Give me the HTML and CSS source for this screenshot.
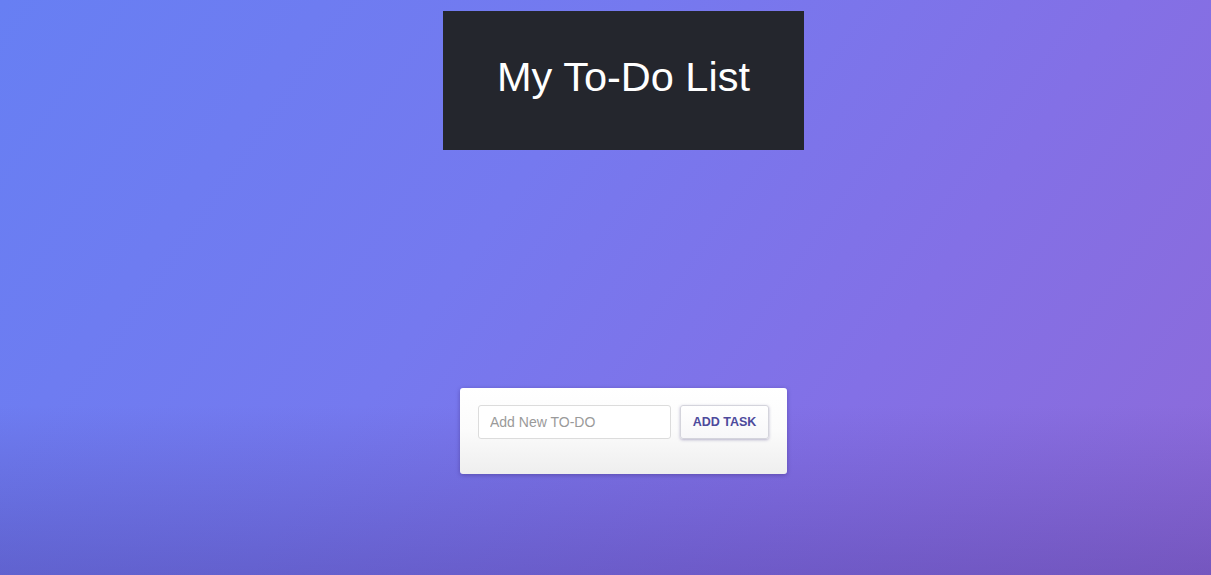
FILE: index.html
```html
<!DOCTYPE html>
<html>
<head>
<meta charset="utf-8">
<link rel="stylesheet" href="styles.css">
</head>
<body>
<div class="page">
  <header class="title-box">
    <h1 class="title">My To-Do List</h1>
  </header>
  <section class="card">
    <form class="add-row">
      <input class="todo-input" type="text" placeholder="Add New TO-DO">
      <button class="add-btn" type="button">ADD TASK</button>
    </form>
    <ul class="todo-list"></ul>
  </section>
</div>
</body>
</html>
```
FILE: styles.css
```css
html, body {
  margin: 0;
  padding: 0;
  height: 100%;
}
body {
  font-family: "Liberation Sans", Arial, sans-serif;
  background: linear-gradient(125deg, #677ff3 0%, #7579ef 40%, #8370e6 70%, #8d6ad9 100%);
  overflow: hidden;
}
.page {
  position: relative;
  min-height: 575px;
  box-sizing: border-box;
  padding-left: 36px;
  display: flex;
  flex-direction: column;
  align-items: center;
}
.page::after {
  content: "";
  position: absolute;
  left: 0;
  right: 0;
  bottom: 0;
  height: 170px;
  background: linear-gradient(to bottom, rgba(60, 40, 130, 0) 0%, rgba(60, 40, 130, 0.3) 100%);
  pointer-events: none;
}
.title-box {
  margin-top: 11px;
  width: 361px;
  height: 139px;
  background: #24262d;
  display: flex;
  align-items: center;
  justify-content: center;
}
.title {
  margin: 0 0 8px 0;
  color: #ffffff;
  font-weight: normal;
  font-size: 41.5px;
  letter-spacing: 0;
}
.card {
  position: relative;
  z-index: 1;
  margin-top: 238px;
  width: 327px;
  box-sizing: border-box;
  padding: 17px 18px 0 18px;
  background: linear-gradient(to bottom, #ffffff 0%, #fbfbfb 50%, #eeeeee 100%);
  border-radius: 3px;
  box-shadow: 0 1px 4px rgba(40, 20, 90, 0.35);
}
.add-row {
  display: flex;
  gap: 9px;
  margin: 0;
}
.todo-input {
  width: 193px;
  height: 34px;
  box-sizing: border-box;
  border: 1px solid #dcdcdc;
  border-radius: 3px;
  padding: 0 11px 1px 11px;
  font-family: "Liberation Sans", Arial, sans-serif;
  font-size: 14px;
  color: #333;
  background: #ffffff;
  outline: none;
}
.todo-input::placeholder {
  color: #9a9a9a;
}
.add-btn {
  width: 89px;
  height: 34px;
  box-sizing: border-box;
  border: 1px solid #d4d4dc;
  border-radius: 3px;
  background: linear-gradient(to bottom, #ffffff, #f7f7f9);
  box-shadow: 0 1px 3px rgba(60, 50, 120, 0.35);
  font-family: "Liberation Sans", Arial, sans-serif;
  font-weight: bold;
  font-size: 12.5px;
  color: #4d4a9c;
  padding: 0 0 1px 0;
  cursor: pointer;
}
.todo-list {
  list-style: none;
  margin: 0;
  padding: 0;
  height: 35px;
}
```
